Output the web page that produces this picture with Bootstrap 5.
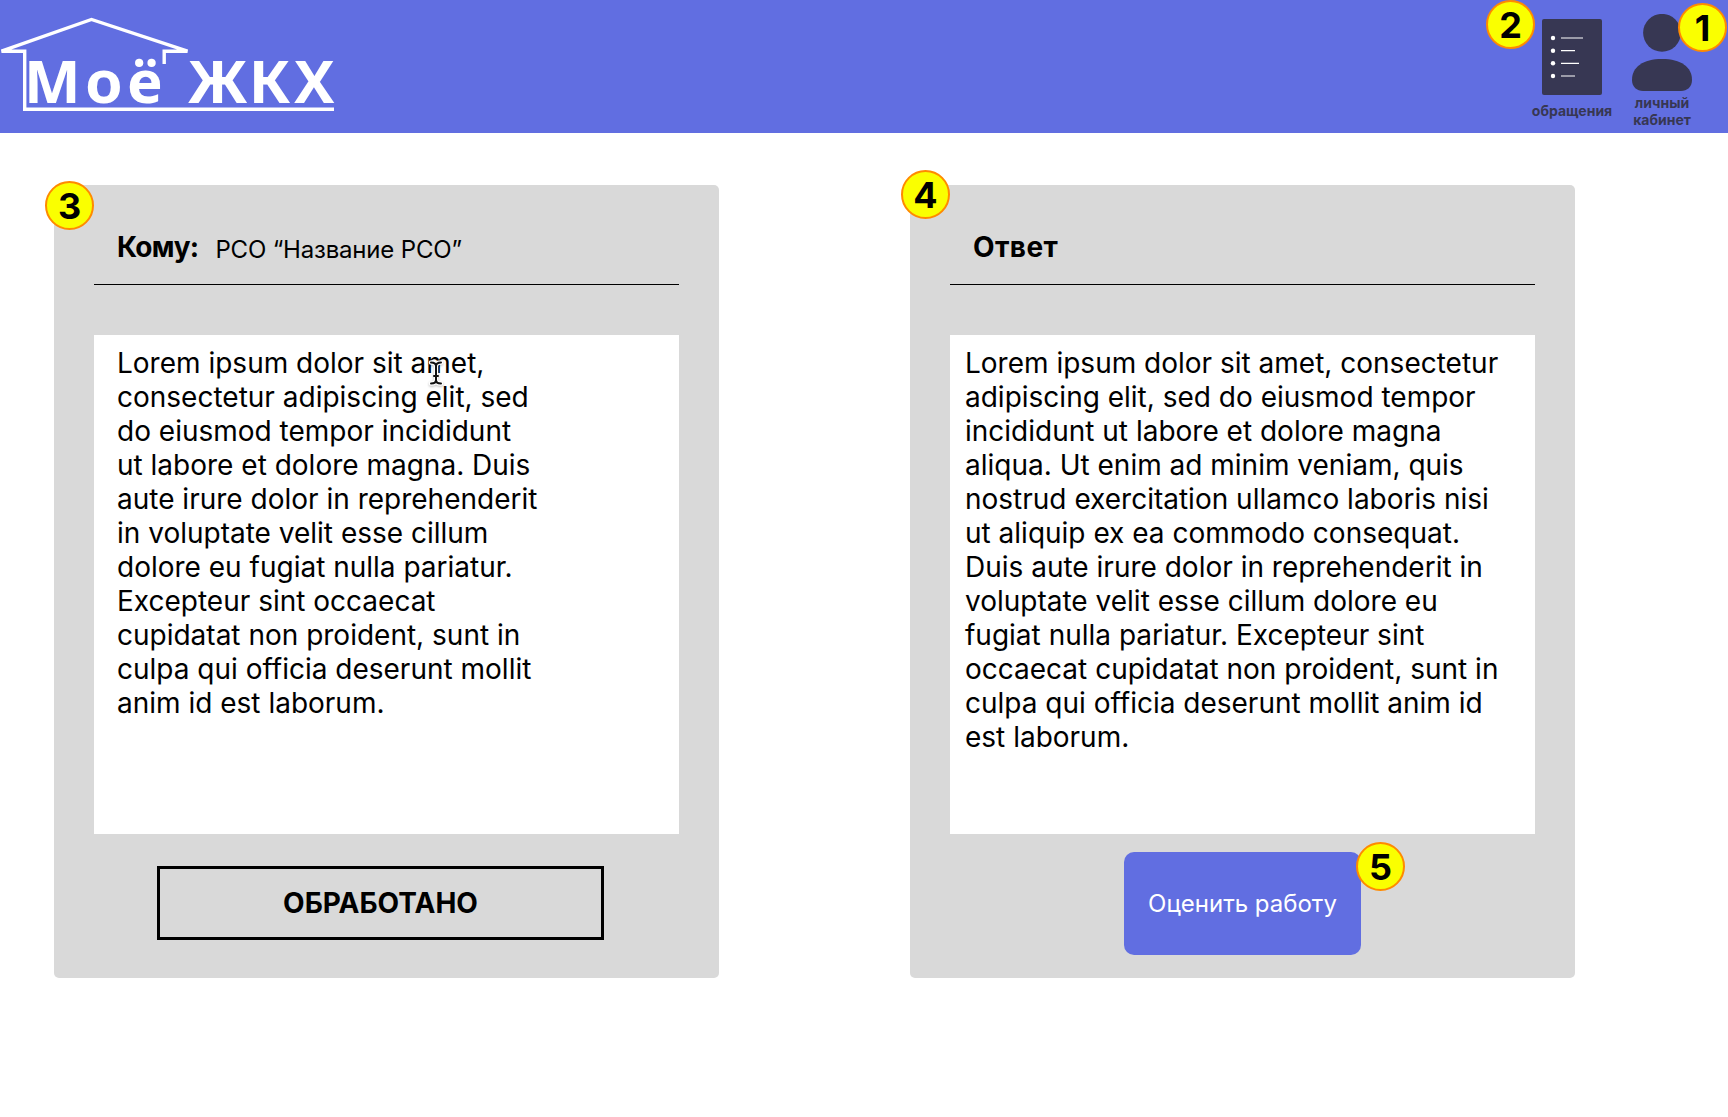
<!DOCTYPE html>
<html lang="ru">
<head>
<meta charset="utf-8">
<meta name="viewport" content="width=device-width, initial-scale=1">
<title>Моё ЖКХ</title>
<link rel="stylesheet" href="https://cdn.jsdelivr.net/npm/bootstrap@5.3.0/dist/css/bootstrap.min.css">
<style>
body{font-family:Inter,"Liberation Sans",sans-serif;color:#000;background:#fff;min-height:1117px;overflow:hidden}
.topbar{height:133px;background:#616ee1}
.brand-art{width:340px;height:133px;display:block}
.brand-art text{font:700 60px "Noto Sans","Open Sans",sans-serif}
.top-link{color:#373753;font-size:14px;line-height:17px;font-weight:700;text-decoration:none;text-align:center}
.link-requests{padding-top:19px;width:82px;margin-right:18px}
.link-requests span{margin-top:7px}
.link-account{padding-top:14px;width:62px;margin-right:35px}
.link-account span{margin-top:3px}
.pin{position:absolute;width:49px;height:49px;border-radius:50%;background:#faff00;border:2px solid #ff8a00;color:#000;font-size:36px;font-weight:700;line-height:46px;text-align:center;letter-spacing:0;z-index:2}
.link-account .pin{left:47px;top:3px}
.link-requests .pin{left:-45px;top:0}
.card-left .pin{left:-9px;top:-4px}
.card-right .pin{left:-9px;top:-15px}
.btn-rate .pin{left:232px;top:-10px}
.panels{padding:52px 0 0 54px;gap:191px}
.letter-card{width:665px;height:793px;background:#d9d9d9;border-radius:5px;padding:0 40px}
.card-title-row{height:100px;padding:45px 23px 0;border-bottom:1px solid #000}
.card-title-row h2{font-size:28px;line-height:34px;font-weight:700;margin:0}
.card-left h2{letter-spacing:-.75px}
.card-right h2{letter-spacing:.4px}
.card-title-row p{font-size:24px;line-height:29px;margin:5px 0 0 17px;letter-spacing:-.18px}
.letter-body{width:585px;height:499px;margin-top:50px;background:#fff;font-size:28px;line-height:34px;padding:11px 0 0 23px}
.card-right .letter-body{padding-left:15px}
.status-box{width:447px;height:74px;border:3px solid #000;margin:32px 0 0 63px;font-size:28px;font-weight:700}
.btn-rate,.btn-rate:hover{width:237px;height:103px;margin:18px 0 0 174px;border:0;border-radius:10px;background:#616ee1;color:#fff;font-size:24px;line-height:29px;padding:0}
.text-cursor{position:absolute;left:427px;top:358px;width:18px;height:30px;filter:drop-shadow(0 1px 1px rgba(0,0,0,.25))}
</style>
</head>
<body class="position-relative">
<header class="topbar d-flex justify-content-between">
  <a href="#" class="d-block" aria-label="Моё ЖКХ">
    <svg class="brand-art" viewBox="0 0 340 133" fill="none" stroke="#fff" stroke-width="3.4">
      <path d="M334 109.300H24.700V51.200H1.500L91.500 19.500 187.500 51.200H164.200V64"/>
      <text x="23.900 85.300 127.300 165 187.700 248.800 294.300" y="102.500" fill="#fff" stroke="none">Моё ЖКХ</text>
    </svg>
  </a>
  <nav class="d-flex">
    <a href="#" class="top-link link-requests position-relative d-flex flex-column align-items-center">
      <svg width="60" height="76" viewBox="0 0 60 76"><rect width="60" height="76" rx="2" fill="#373753"/><g fill="#fff"><circle cx="11" cy="19" r="2.2"/><circle cx="11" cy="31.7" r="2.2"/><circle cx="11" cy="44.3" r="2.2"/><circle cx="11" cy="57" r="2.2"/></g><path d="M19 19H41M19 31.700H33M19 44.300H37M19 57H33" stroke="#fff" stroke-width="1.200"/></svg>
      <span>обращения</span><b class="pin">2</b>
    </a>
    <a href="#" class="top-link link-account position-relative d-flex flex-column align-items-center">
      <svg width="60" height="77" viewBox="0 0 60 77" fill="#373753"><circle cx="30" cy="18.800" r="18.900"/><path d="M0 66C0 53 11 45 30 45S60 53 60 66C60 73 55 77 49 77H11C5 77 0 73 0 66Z"/></svg>
      <span>личный<br>кабинет</span><b class="pin">1</b>
    </a>
  </nav>
</header>
<main class="panels d-flex">
  <section class="letter-card card-left position-relative">
    <b class="pin">3</b>
    <div class="card-title-row d-flex align-items-start"><h2>Кому:</h2><p>РСО “Название РСО”</p></div>
    <div class="letter-body">Lorem ipsum dolor sit amet,<br>consectetur adipiscing elit, sed<br>do eiusmod tempor incididunt<br>ut labore et dolore magna. Duis<br>aute irure dolor in reprehenderit<br>in voluptate velit esse cillum<br>dolore eu fugiat nulla pariatur.<br>Excepteur sint occaecat<br>cupidatat non proident, sunt in<br>culpa qui officia deserunt mollit<br>anim id est laborum.</div>
    <div class="status-box d-flex align-items-center justify-content-center">ОБРАБОТАНО</div>
  </section>
  <section class="letter-card card-right position-relative">
    <b class="pin">4</b>
    <div class="card-title-row"><h2>Ответ</h2></div>
    <div class="letter-body">Lorem ipsum dolor sit amet, consectetur<br>adipiscing elit, sed do eiusmod tempor<br>incididunt ut labore et dolore magna<br>aliqua. Ut enim ad minim veniam, quis<br>nostrud exercitation ullamco laboris nisi<br>ut aliquip ex ea commodo consequat.<br>Duis aute irure dolor in reprehenderit in<br>voluptate velit esse cillum dolore eu<br>fugiat nulla pariatur. Excepteur sint<br>occaecat cupidatat non proident, sunt in<br>culpa qui officia deserunt mollit anim id<br>est laborum.</div>
    <button type="button" class="btn btn-rate position-relative">Оценить работу<b class="pin">5</b></button>
  </section>
</main>
<svg class="text-cursor" viewBox="0 0 18 30" fill="none" stroke-linecap="round"><path d="M4 4.500C7 4.500 9 5.500 9 8V22C9 24.500 7 25.500 4 25.500M14 4.500C11 4.500 9 5.500 9 8M9 22C9 24.500 11 25.500 14 25.500" stroke="#fff" stroke-width="4.500"/><path d="M4 4.500C7 4.500 9 5.500 9 8V22C9 24.500 7 25.500 4 25.500M14 4.500C11 4.500 9 5.500 9 8M9 22C9 24.500 11 25.500 14 25.500M7 18H11" stroke="#111" stroke-width="2"/></svg>
<script src="https://cdn.jsdelivr.net/npm/bootstrap@5.3.0/dist/js/bootstrap.bundle.min.js"></script>
</body>
</html>
